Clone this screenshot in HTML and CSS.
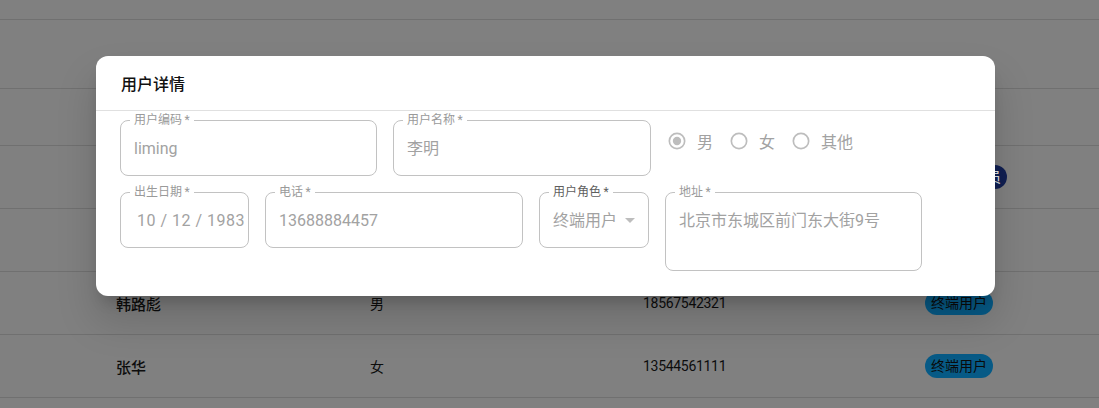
FILE: index.html
```html
<!DOCTYPE html>
<html lang="zh">
<head>
<meta charset="utf-8">
<title>用户详情</title>
<link rel="stylesheet" href="styles.css">
</head>
<body>
<div class="table">
  <div class="row r0"></div>
  <div class="row r1"></div>
  <div class="row r2"></div>
  <div class="row r3">
    <span class="name"></span><span></span><span></span>
    <span><span class="chip chip-navy">系统管理员</span></span>
  </div>
  <div class="row r4"></div>
  <div class="row r5">
    <span class="name">韩路彪</span><span>男</span><span class="num">18567542321</span>
    <span><span class="chip chip-blue">终端用户</span></span>
  </div>
  <div class="row r6">
    <span class="name">张华</span><span>女</span><span class="num">13544561111</span>
    <span><span class="chip chip-blue">终端用户</span></span>
  </div>
</div>

<div class="dialog">
  <div class="dialog-title">用户详情</div>
  <div class="dialog-body">
    <div class="form-row">
      <div class="field w257">
        <span class="label">用户编码&#8201;*</span>
        <div class="value latin">liming</div>
      </div>
      <div class="field w258">
        <span class="label">用户名称&#8201;*</span>
        <div class="value">李明</div>
      </div>
      <div class="radios">
        <label class="radio">
          <svg width="20" height="20" viewBox="0 0 24 24"><circle cx="12" cy="12" r="9.2" fill="none" stroke="#bdbdbd" stroke-width="2"/><circle cx="12" cy="12" r="5" fill="#bdbdbd"/></svg>
          <span>男</span>
        </label>
        <label class="radio">
          <svg width="20" height="20" viewBox="0 0 24 24"><circle cx="12" cy="12" r="9.2" fill="none" stroke="#bdbdbd" stroke-width="2"/></svg>
          <span>女</span>
        </label>
        <label class="radio">
          <svg width="20" height="20" viewBox="0 0 24 24"><circle cx="12" cy="12" r="9.2" fill="none" stroke="#bdbdbd" stroke-width="2"/></svg>
          <span>其他</span>
        </label>
      </div>
    </div>
    <div class="form-row">
      <div class="field w129">
        <span class="label">出生日期&#8201;*</span>
        <div class="value latin date">10 / 12 / 1983</div>
      </div>
      <div class="field w258">
        <span class="label">电话&#8201;*</span>
        <div class="value latin">13688884457</div>
      </div>
      <div class="field w110">
        <span class="label label-dark">用户角色&#8201;*</span>
        <div class="value select">终端用户<span class="arrow"></span></div>
      </div>
      <div class="field w257 multiline">
        <span class="label">地址&#8201;*</span>
        <div class="value">北京市东城区前门东大街9号</div>
      </div>
    </div>
  </div>
</div>
</body>
</html>
```

FILE: styles.css
```css
* { box-sizing: border-box; }
html, body {
  margin: 0;
  padding: 0;
  width: 1099px;
  height: 408px;
  overflow: hidden;
  background: #808080;
  font-family: Roboto, "Noto Sans CJK SC", sans-serif;
}

.table {
  display: flex;
  flex-direction: column;
}
.row {
  display: grid;
  grid-template-columns: 254px 273px 282px 1fr;
  align-items: center;
  padding-left: 116px;
  border-bottom: 1px solid #707070;
  color: #0d0d0d;
  font-size: 14px;
}
.r0 { height: 20px; }
.r1 { height: 69px; }
.r2 { height: 57px; }
.r3, .r4, .r5, .r6 { height: 63px; }
.name { font-size: 15px; font-weight: 500; }
.num { font-size: 14px; letter-spacing: -0.3px; }
.chip {
  display: inline-block;
  height: 24px;
  line-height: 24px;
  padding: 0 6px;
  border-radius: 12px;
  font-size: 14px;
  color: #0a0a0a;
}
.chip-blue { background: #075a86; }
.chip-navy { background: #101f52; color: #e8e8e8; }

.dialog {
  position: absolute;
  left: 96px;
  top: 56px;
  width: 899px;
  height: 240px;
  background: #fff;
  border-radius: 12px;
  box-shadow: 0 11px 15px -7px rgba(0,0,0,0.2), 0 24px 38px 3px rgba(0,0,0,0.14);
}
.dialog-title {
  height: 55px;
  padding: 0 25px;
  display: flex;
  align-items: center;
  font-size: 16px;
  font-weight: 500;
  color: #111;
  border-bottom: 1px solid #e0e0e0;
}
.dialog-body {
  padding: 9px 24px 24px 24px;
  display: flex;
  flex-direction: column;
  gap: 16px;
}
.form-row {
  display: flex;
  align-items: flex-start;
  gap: 16px;
}
.field {
  position: relative;
  height: 56px;
  border: 1px solid #c2c2c2;
  border-radius: 8px;
}
.w257 { width: 257px; }
.w258 { width: 258px; }
.w129 { width: 129px; }
.w110 { width: 110px; }
.field.multiline { height: 79px; }
.label {
  position: absolute;
  left: 9px;
  top: -9px;
  padding: 0 4px;
  background: #fff;
  font-size: 12px;
  line-height: 16px;
  color: #9a9a9a;
  white-space: nowrap;
}
.label-dark { color: #5e5e5e; }
.value {
  padding: 16px 13px 0 13px;
  font-size: 16px;
  line-height: 23px;
  color: #a2a2a2;
  white-space: nowrap;
  overflow: hidden;
}
.value.date { padding-left: 16px; padding-right: 0; letter-spacing: 0.5px; }
.value.select {
  display: flex;
  align-items: center;
  gap: 8px;
}
.arrow {
  display: inline-block;
  width: 0;
  height: 0;
  border-left: 5px solid transparent;
  border-right: 5px solid transparent;
  border-top: 5px solid #bdbdbd;
}
.radios {
  display: flex;
  align-items: center;
  margin-top: 9px;
  margin-left: 0;
}
.radio {
  display: flex;
  align-items: center;
  gap: 10px;
  margin-right: 16px;
  font-size: 16px;
  color: #a2a2a2;
}
.radio svg { display: block; }
```
